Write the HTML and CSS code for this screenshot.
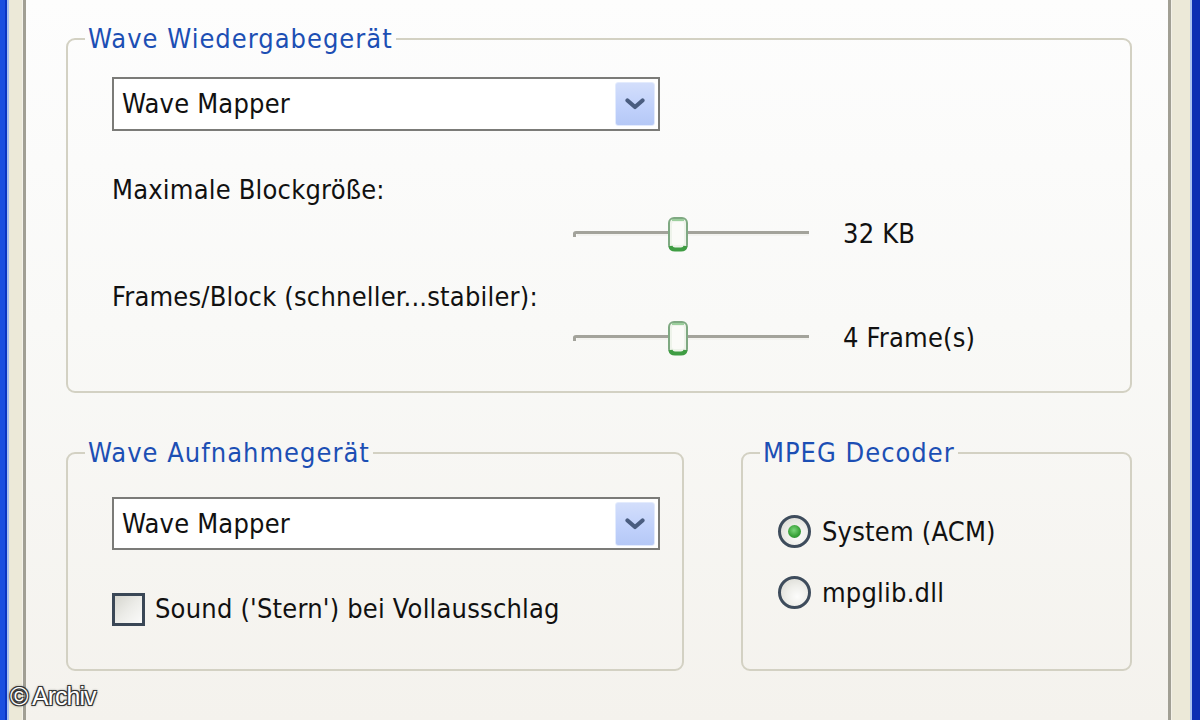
FILE: index.html
```html
<!DOCTYPE html>
<html lang="de">
<head>
<meta charset="utf-8">
<title>Wave Einstellungen</title>
<link rel="stylesheet" href="styles.css">
</head>
<body>
<div class="window">
  <div class="frame-left"></div>
  <div class="page">
    <fieldset class="group group-play">
      <legend>Wave Wiedergabegerät</legend>
      <div class="body body-play">
        <div class="combo">
          <span class="combo-text">Wave Mapper</span>
          <span class="combo-btn"><svg width="20" height="12" viewBox="0 0 20 12"><path d="M2.5 2.5 L10 9 L17.5 2.5" fill="none" stroke="#4a5d80" stroke-width="4.2" stroke-linecap="round" stroke-linejoin="round"/></svg></span>
        </div>
        <div class="label label-first">Maximale Blockgröße:</div>
        <div class="slider-row">
          <div class="slider">
            <svg class="track" width="237" height="12" viewBox="0 0 237 12"><path d="M1.5 9 L1.5 5.5 Q1.5 4.5 3 4.5 L236 4.5" fill="none" stroke="#a3a39b" stroke-width="3"/><path d="M4 7 L236 7" stroke="#f1f1ec" stroke-width="1.5"/></svg>
            <svg class="thumb" width="22" height="36" viewBox="0 0 22 36"><rect x="2" y="2" width="18" height="32" rx="5" fill="#eef3ea" stroke="#7fa982" stroke-width="2"/><rect x="5" y="6" width="12" height="23" rx="2" fill="#fbfbf8"/><path d="M3.5 30 Q4 33.5 8 33.5 L14 33.5 Q18 33.5 18.5 30" fill="none" stroke="#3f9d43" stroke-width="4"/><path d="M5 4 L17 4" stroke="#9ccf9d" stroke-width="2"/></svg>
          </div>
          <span class="value">32 KB</span>
        </div>
        <div class="label label-second">Frames/Block (schneller...stabiler):</div>
        <div class="slider-row slider-row-second">
          <div class="slider">
            <svg class="track" width="237" height="12" viewBox="0 0 237 12"><path d="M1.5 9 L1.5 5.5 Q1.5 4.5 3 4.5 L236 4.5" fill="none" stroke="#a3a39b" stroke-width="3"/><path d="M4 7 L236 7" stroke="#f1f1ec" stroke-width="1.5"/></svg>
            <svg class="thumb" width="22" height="36" viewBox="0 0 22 36"><rect x="2" y="2" width="18" height="32" rx="5" fill="#eef3ea" stroke="#7fa982" stroke-width="2"/><rect x="5" y="6" width="12" height="23" rx="2" fill="#fbfbf8"/><path d="M3.5 30 Q4 33.5 8 33.5 L14 33.5 Q18 33.5 18.5 30" fill="none" stroke="#3f9d43" stroke-width="4"/><path d="M5 4 L17 4" stroke="#9ccf9d" stroke-width="2"/></svg>
          </div>
          <span class="value">4 Frame(s)</span>
        </div>
      </div>
    </fieldset>

    <div class="row">
      <fieldset class="group group-rec">
        <legend>Wave Aufnahmegerät</legend>
        <div class="body body-rec">
          <div class="combo">
            <span class="combo-text">Wave Mapper</span>
            <span class="combo-btn"><svg width="20" height="12" viewBox="0 0 20 12"><path d="M2.5 2.5 L10 9 L17.5 2.5" fill="none" stroke="#4a5d80" stroke-width="4.2" stroke-linecap="round" stroke-linejoin="round"/></svg></span>
          </div>
          <div class="check-row">
            <span class="checkbox"></span>
            <span class="check-text">Sound ('Stern') bei Vollausschlag</span>
          </div>
        </div>
      </fieldset>
      <fieldset class="group group-mpeg">
        <legend>MPEG Decoder</legend>
        <div class="body body-mpeg">
          <div class="radio-row">
            <span class="radio radio-on"><span class="dot"></span></span>
            <span class="radio-text">System (ACM)</span>
          </div>
          <div class="radio-row radio-row-second">
            <span class="radio"></span>
            <span class="radio-text">mpglib.dll</span>
          </div>
        </div>
      </fieldset>
    </div>
  </div>
  <div class="frame-right"></div>
  <div class="watermark">© Archiv</div>
</div>
</body>
</html>
```
FILE: styles.css
```css
* { box-sizing: border-box; }
html, body { margin: 0; padding: 0; }
body {
  width: 1200px;
  height: 720px;
  overflow: hidden;
  font-family: "DejaVu Sans Condensed", "DejaVu Sans", sans-serif;
  font-stretch: condensed;
  font-size: 27px;
  letter-spacing: 0.2px;
  color: #111;
}
.window {
  position: relative;
  display: flex;
  width: 1200px;
  height: 720px;
}
.frame-left {
  width: 26px;
  flex: none;
  background: linear-gradient(to right,
    #1a4fe0 0, #1a4fe0 5px,
    #0b35c2 5px, #0b35c2 7px,
    #a9c2ef 7px, #a9c2ef 9px,
    #ece9d8 9px, #ece9d8 22px,
    #f3f1e8 22px, #f3f1e8 23px,
    #a19f94 23px, #a19f94 26px);
}
.frame-right {
  width: 32px;
  flex: none;
  background: linear-gradient(to right,
    #a19f94 0, #a19f94 3px,
    #f3f1e8 3px, #f3f1e8 4px,
    #ece9d8 4px, #ece9d8 22px,
    #a9c2ef 22px, #a9c2ef 24px,
    #0b2fb3 24px, #0b2fb3 32px);
}
.page {
  flex: 1;
  padding: 24px 36px 0 40px;
  background: linear-gradient(to bottom, #fdfdfd 0, #f9f9f7 45%, #f4f2ed 100%);
}
.group {
  margin: 0;
  padding: 0;
  min-width: 0;
  border: 2px solid #d3d1c3;
  border-radius: 9px;
}
.group legend {
  margin-left: 17px;
  padding: 0 3px;
  line-height: 30px;
  letter-spacing: 1px;
  color: #1c4fb4;
}
.body-play { padding: 23px 0 35px 44px; }
.combo {
  display: flex;
  align-items: center;
  justify-content: space-between;
  width: 548px;
  height: 54px;
  border: 2px solid #7b7b78;
  background: #fff;
  padding: 3px 3px 3px 8px;
}
.combo-text { line-height: 30px; }
.combo-btn {
  display: flex;
  align-items: center;
  justify-content: center;
  width: 40px;
  height: 44px;
  border: 1px solid #e3ebfd;
  border-radius: 3px;
  background: linear-gradient(to bottom, #d3defb 0, #c0d1fb 60%, #b5c8f6 100%);
}
.label { line-height: 30px; }
.label-first { margin-top: 44px; }
.label-second { margin-top: 30px; }
.slider-row {
  display: flex;
  align-items: center;
  height: 36px;
  margin-top: 11px;
  margin-left: 461px;
}
.slider-row-second { margin-top: 8px; }
.slider {
  position: relative;
  width: 237px;
  height: 36px;
  display: flex;
  align-items: center;
}
.track { display: block; }
.thumb {
  position: absolute;
  left: 94px;
  top: 0;
}
.value {
  margin-left: 33px;
  line-height: 30px;
}
.row {
  display: flex;
  margin-top: 45px;
}
.group-rec { width: 618px; }
.group-mpeg { width: 391px; margin-left: 57px; }
.body-rec { padding: 29px 0 43px 44px; }
.body-rec .combo { height: 53px; }
.check-row {
  display: flex;
  align-items: center;
  margin-top: 42px;
  height: 34px;
}
.checkbox {
  width: 33px;
  height: 33px;
  border: 3px solid #3a4756;
  background: linear-gradient(135deg, #d6d6cf 0, #ecece8 50%, #fbfbfa 100%);
}
.check-text { margin-left: 10px; line-height: 30px; }
.body-mpeg { padding: 47px 0 0 35px; }
.radio-row {
  display: flex;
  align-items: center;
  height: 33px;
}
.radio-row-second { margin-top: 28px; }
.radio {
  width: 33px;
  height: 33px;
  border-radius: 50%;
  border: 3px solid #3e4c5c;
  background: radial-gradient(circle at 60% 65%, #fcfcfb 0, #eeeeea 45%, #d6d6cf 100%);
  display: flex;
  align-items: center;
  justify-content: center;
}
.dot {
  width: 13px;
  height: 13px;
  border-radius: 50%;
  background: radial-gradient(circle at 45% 40%, #7bd67b 0, #3aa33a 55%, #22802a 100%);
}
.radio-text { margin-left: 11px; line-height: 30px; }
.watermark {
  position: absolute;
  left: 10px;
  top: 682px;
  font-family: "Liberation Sans", Arial, sans-serif;
  font-size: 25px;
  letter-spacing: -1px;
  color: #fff;
  text-shadow: 1px 1px 0 #333, -1px -1px 0 #333, 1px -1px 0 #333, -1px 1px 0 #333, 0 0 3px #000;
}
```
